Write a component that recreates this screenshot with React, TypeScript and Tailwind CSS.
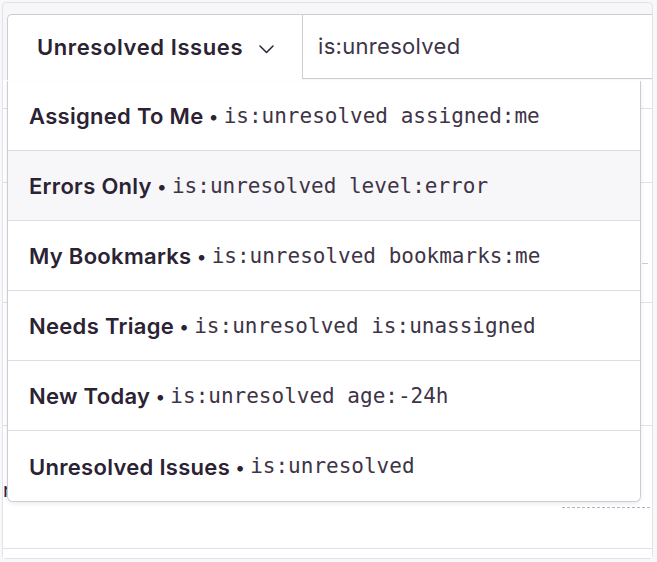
import React from "react";

const items = [
  { name: "Assigned To Me", query: "is:unresolved assigned:me" },
  { name: "Errors Only", query: "is:unresolved level:error" },
  { name: "My Bookmarks", query: "is:unresolved bookmarks:me" },
  { name: "Needs Triage", query: "is:unresolved is:unassigned" },
  { name: "New Today", query: "is:unresolved age:-24h" },
  { name: "Unresolved Issues", query: "is:unresolved" },
];

const sans = { fontFamily: "Inter, 'Noto Sans', sans-serif" };
const mono = { fontFamily: "'DejaVu Sans Mono', 'Liberation Mono', monospace" };

export default function App() {
  return (
    <div className="w-[657px] h-[562px] bg-[#f8f8fa] overflow-hidden pt-[2px] pl-[2px]" style={sans}>
      <div className="w-[651px] h-[557px] border border-[#e4e1e8] rounded-[4px] bg-[#f7f7f9] flex flex-col">
        {/* header */}
        <div className="flex pt-[11px] pl-[4px] relative z-10">
          <div className="relative w-[295px] h-[66px] bg-white border border-[#cfcbd4] border-b-0 border-r-0 rounded-tl-[5px] flex items-center pl-[29px]">
            <span className="text-[22px] font-semibold text-[#2b2233] tracking-[0.6px]">Unresolved Issues</span>
            <svg className="ml-[16px] mt-[3px]" width="15" height="9" viewBox="0 0 15 9" fill="none">
              <polyline points="1,1 7.5,7.5 14,1" stroke="#2b2233" strokeWidth="1.5" strokeLinecap="round" strokeLinejoin="round" />
            </svg>
            {/* dropdown */}
            <div className="absolute left-[-1px] top-[66px] w-[634px] bg-white border border-[#cfcbd4] border-t-0 rounded-b-[6px] shadow-[0_2px_4px_rgba(0,0,0,0.08)] overflow-hidden">
              {items.map((it, i) => (
                <div
                  key={it.name}
                  className={`h-[70px] flex items-center pl-[21px] pt-[2px] whitespace-nowrap ${
                    i < items.length - 1 ? "border-b border-[#dedbe3]" : ""
                  } ${i === 1 ? "bg-[#f7f6f9]" : "bg-white"}`}
                >
                  <span className="text-[22px] font-semibold text-[#2b2233] tracking-[0.3px]">{it.name}</span>
                  <span className="text-[18px] text-[#2b2233] mx-[5px]">•</span>
                  <span className="text-[21px] text-[#3e3446]" style={mono}>{it.query}</span>
                </div>
              ))}
            </div>
          </div>
          <div className="flex-1 h-[65px] bg-white border border-[#cfcbd4] border-r-0 flex items-center pl-[15px]">
            <span className="text-[22px] text-[#3e3446] tracking-[0.3px]">is:unresolved</span>
          </div>
        </div>
        {/* background content */}
        <div className="flex-1 bg-white flex flex-col">
          <div className="h-[29px] border-b border-[#e2dfe6]" />
          <div className="h-[74px] border-b border-[#e2dfe6]" />
          <div className="h-[120px] border-b border-[#e2dfe6] relative">
            <div className="absolute right-[4px] top-[80px] w-[6px] border-t border-dashed border-[#cfcbd4]" />
          </div>
          <div className="h-[123px] border-b border-[#e2dfe6]" />
          <div className="h-[123px] border-b border-[#e2dfe6] flex flex-col justify-end">
            <div className="text-[20px] text-[#2b2233] whitespace-nowrap leading-[24px] mb-[5px] pl-0">
              resolved at the time marked in the event when the queue
            </div>
            <div className="flex justify-end pr-[2px] mb-[40px]">
              <div className="w-[88px] border-t border-dashed border-[#b8b3bf]" />
            </div>
          </div>
          <div className="flex-1" />
        </div>
      </div>
    </div>
  );
}
